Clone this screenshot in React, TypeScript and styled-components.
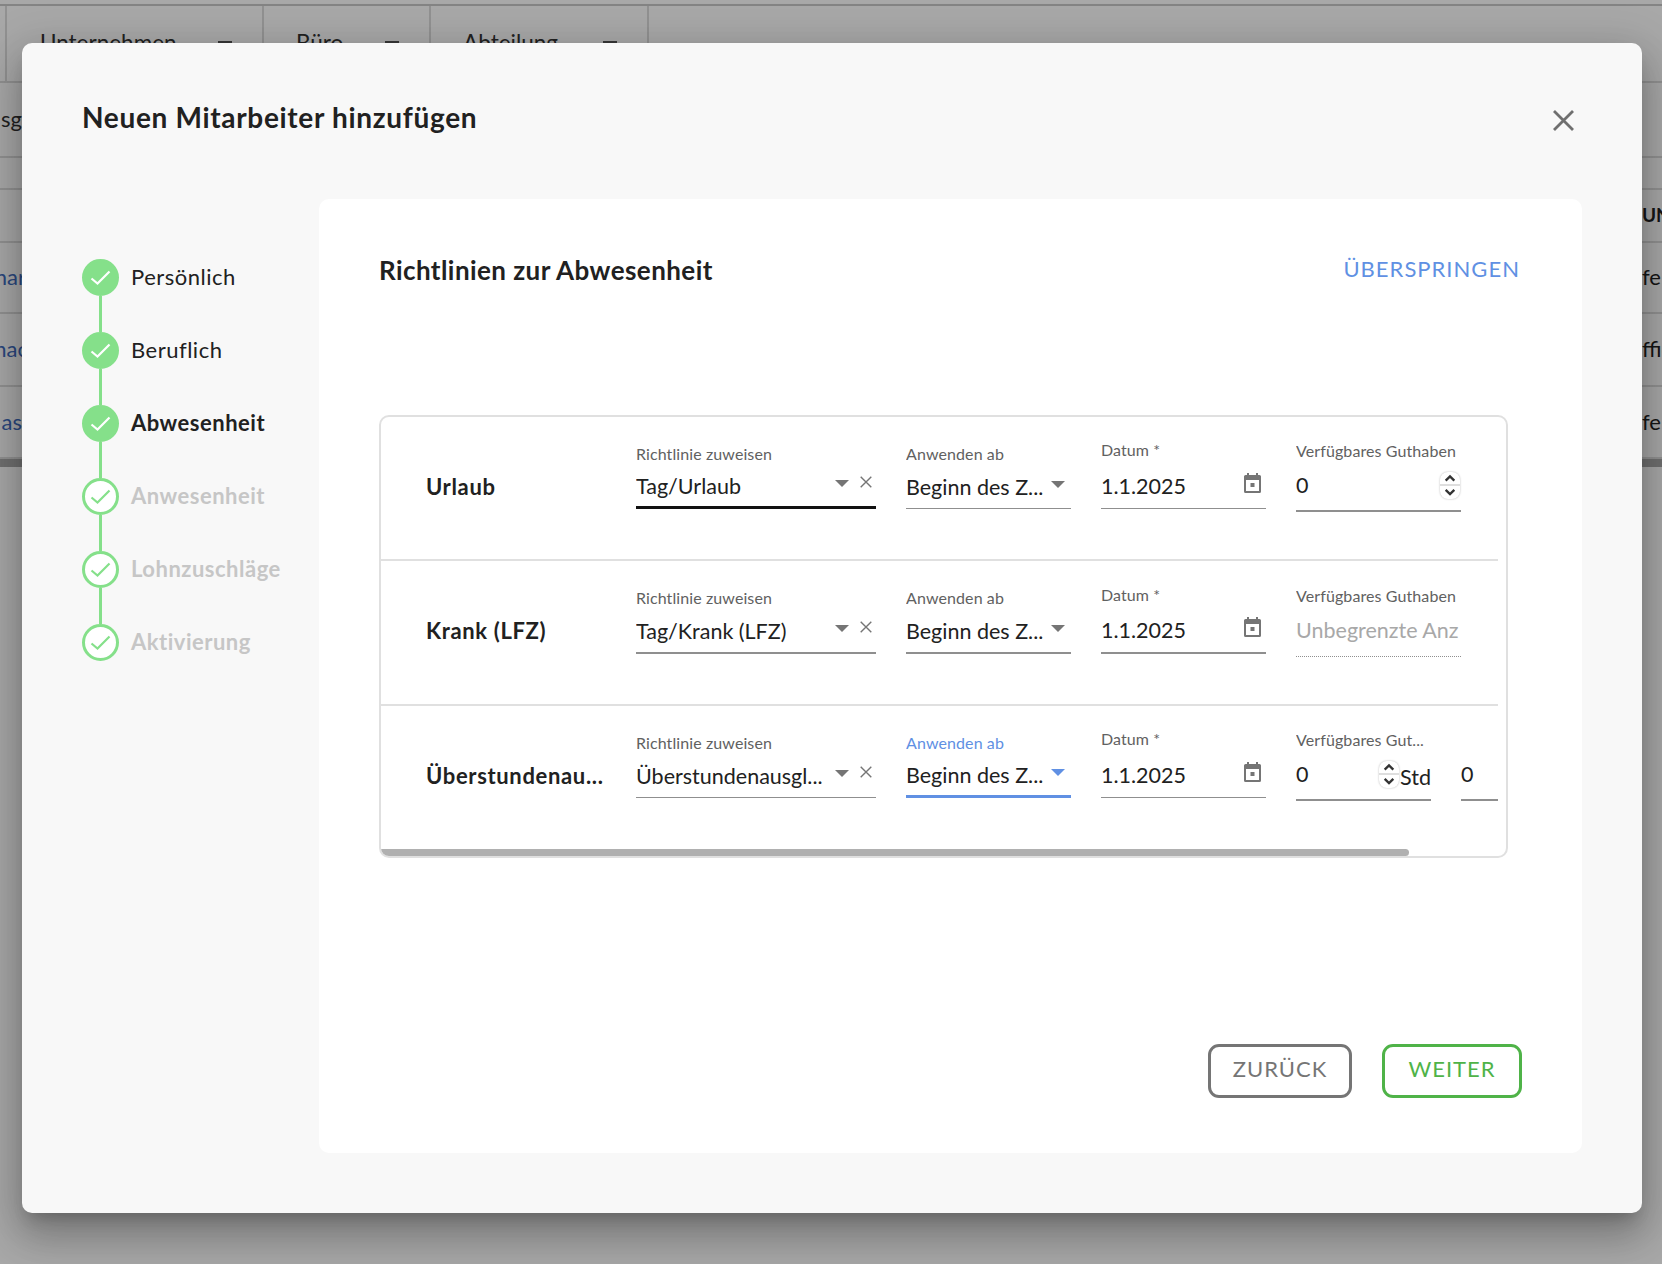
import React from "react";
import styled, { createGlobalStyle } from "styled-components";

const Global = createGlobalStyle`
  html, body { margin: 0; padding: 0; height: 100%; background: #fff; overflow: hidden; }
  body { font-family: "Lato", "Noto Sans", sans-serif; color: #212121; }
  * { box-sizing: border-box; }
`;

const Page = styled.div`
  position: relative;
  width: 1662px;
  height: 1264px;
  overflow: hidden;
`;

/* ---------- table behind the dialog ---------- */
const TableTop = styled.div`
  height: 6px;
  border-bottom: 2px solid #c8c8c8;
`;
const HeaderRow = styled.div`
  height: 77px;
  display: flex;
  border-bottom: 2px solid #dcdcdc;
  padding-left: 5px;
`;
const HeaderCell = styled.div<{ $w: number; $pad: number }>`
  width: ${(p) => p.$w}px;
  border-left: 2px solid #dcdcdc;
  display: flex;
  align-items: center;
  padding-left: ${(p) => p.$pad}px;
  font-size: 22.5px;
  color: #333;
  padding-bottom: 2px;
`;
const HeaderCaret = styled.span<{ $gap: number }>`
  margin-left: ${(p) => p.$gap}px;
  width: 14px;
  height: 3px;
  align-self: flex-start;
  margin-top: 35px;
  background: #555;
`;
const TableRow = styled.div<{ $h: number }>`
  height: ${(p) => p.$h}px;
  display: flex;
  justify-content: space-between;
  align-items: center;
  border-bottom: 2px solid #dcdcdc;
  font-size: 22px;
  padding-bottom: 2px;
`;
const EdgeLeft = styled.div<{ $blue?: boolean }>`
  width: 22px;
  overflow: hidden;
  display: flex;
  justify-content: flex-end;
  white-space: nowrap;
  color: ${(p) => (p.$blue ? "#3f6cc0" : "#333")};
`;
const EdgeLeftText = styled.span<{ $cut: number }>`
  flex: none;
  margin-right: -${(p) => p.$cut}px;
`;
const EdgeRight = styled.div<{ $small?: boolean }>`
  width: 20px;
  overflow: hidden;
  white-space: nowrap;
  color: #222;
  font-size: ${(p) => (p.$small ? 19 : 22)}px;
  font-weight: ${(p) => (p.$small ? 700 : 400)};
`;
const TableScroll = styled.div`
  height: 8px;
  background: #aaa;
`;

/* ---------- dialog ---------- */
const Overlay = styled.div`
  position: absolute;
  inset: 0;
  background: rgba(0, 0, 0, 0.34);
  padding: 43px 20px 50px 22px;
`;
const Modal = styled.div`
  height: 1170px;
  background: #f8f8f8;
  border-radius: 10px;
  box-shadow: 0 11px 15px -7px rgba(0, 0, 0, 0.2), 0 24px 38px 3px rgba(0, 0, 0, 0.18),
    0 9px 46px 8px rgba(0, 0, 0, 0.14);
  display: flex;
  flex-direction: column;
`;
const ModalHead = styled.div`
  height: 156px;
  flex: none;
  display: flex;
  justify-content: space-between;
  padding: 56px 68px 0 60px;
`;
const Title = styled.h1`
  margin: 0;
  font-size: 28px;
  line-height: 36px;
  font-weight: 700;
  color: #212121;
  letter-spacing: 0.68px;
`;
const CloseIcon = styled.svg`
  width: 21px;
  height: 21px;
  margin-top: 11px;
`;
const ModalBody = styled.div`
  flex: 1;
  min-height: 0;
  display: flex;
  padding: 0 60px 60px 60px;
`;
const Side = styled.nav`
  width: 237px;
  flex: none;
  padding-top: 60px;
`;
const StepRow = styled.div`
  display: flex;
  align-items: center;
  gap: 12px;
  height: 37px;
`;
const StepCircle = styled.div<{ $done: boolean }>`
  width: 37px;
  height: 37px;
  border-radius: 50%;
  flex: none;
  display: flex;
  align-items: center;
  justify-content: center;
  background: ${(p) => (p.$done ? "#85e08a" : "#fff")};
  border: 3px solid #85e08a;
`;
const StepText = styled.span<{ $state: "done" | "active" | "todo" }>`
  font-size: 22px;
  letter-spacing: 0.5px;
  white-space: nowrap;
  padding-bottom: 2px;
  font-weight: ${(p) => (p.$state === "done" ? 400 : 700)};
  color: ${(p) => (p.$state === "todo" ? "#c6c6c6" : "#212121")};
`;
const StepLine = styled.div`
  width: 3px;
  height: 36px;
  margin-left: 17px;
  background: #85e08a;
`;
const Panel = styled.section`
  flex: 1;
  min-width: 0;
  background: #fff;
  border-radius: 10px;
  padding: 53px 62px 55px 60px;
  display: flex;
  flex-direction: column;
`;
const PanelHead = styled.div`
  display: flex;
  justify-content: space-between;
  align-items: center;
  height: 36px;
`;
const PanelTitle = styled.h2`
  margin: 0;
  font-size: 26px;
  font-weight: 700;
  letter-spacing: 0.43px;
  color: #212121;
`;
const Skip = styled.a`
  font-size: 22px;
  letter-spacing: 1.02px;
  color: #6090e3;
  margin-bottom: 3px;
`;
const Card = styled.div`
  margin-top: 127px;
  width: 1129px;
  height: 443px;
  border: 2px solid #e0e0e0;
  border-radius: 10px;
  overflow: hidden;
  display: flex;
  flex-direction: column;
`;
const Row = styled.div<{ $last?: boolean; $h: number }>`
  width: 1117px;
  height: ${(p) => p.$h}px;
  flex: none;
  display: flex;
  align-items: flex-start;
  overflow: hidden;
  padding-left: 45px;
  gap: 30px;
  border-bottom: ${(p) => (p.$last ? "0" : "2px solid #e0e0e0")};
`;
const RowName = styled.div`
  width: 180px;
  flex: none;
  padding-top: 53px;
  line-height: 34px;
  font-size: 22px;
  font-weight: 700;
  letter-spacing: 0.65px;
  white-space: nowrap;
  overflow: hidden;
  color: #212121;
`;
const Field = styled.div<{ $w: number; $top: number }>`
  width: ${(p) => p.$w}px;
  flex: none;
  padding-top: ${(p) => p.$top}px;
`;
const Label = styled.div<{ $focus?: boolean }>`
  height: 20px;
  line-height: 20px;
  font-size: 16px;
  letter-spacing: 0.1px;
  white-space: nowrap;
  overflow: hidden;
  color: ${(p) => (p.$focus ? "#6090e3" : "#616161")};
`;
const Value = styled.div<{ $h: number; $line: string }>`
  height: ${(p) => p.$h}px;
  display: flex;
  align-items: center;
  border-bottom: ${(p) => p.$line};
  font-size: 21.5px;
  color: #212121;
`;
const ValueText = styled.span<{ $muted?: boolean; $drop?: number }>`
  flex: 1;
  min-width: 0;
  white-space: nowrap;
  overflow: hidden;
  padding-top: ${(p) => Math.max(p.$drop ?? 0, 0)}px;
  padding-bottom: ${(p) => Math.max(-(p.$drop ?? 0), 0)}px;
  color: ${(p) => (p.$muted ? "#a8a8a8" : "#212121")};
`;
const Caret = styled.span<{ $focus?: boolean }>`
  flex: none;
  width: 0;
  height: 0;
  margin: 0 0 4px 4px;
  border-left: 7px solid transparent;
  border-right: 7px solid transparent;
  border-top: 7px solid ${(p) => (p.$focus ? "#6090e3" : "#757575")};
`;
const ClearIcon = styled.svg`
  flex: none;
  width: 12px;
  height: 12px;
  margin: 0 4px 6px 11px;
`;
const CaretEnd = styled.span`
  flex: none;
  width: 6px;
`;
const CalendarIcon = styled.svg`
  flex: none;
  width: 17px;
  height: 20px;
  margin: 0 5px 3px 0;
`;
const Stepper = styled.div`
  flex: none;
  width: 20px;
  height: 27px;
  margin: 0 1px 1px 0;
  border-radius: 8px;
  background: #fff;
  box-shadow: 0 0 2px rgba(0, 0, 0, 0.3);
  display: flex;
  flex-direction: column;
`;
const StepperHalf = styled.svg<{ $top?: boolean }>`
  flex: 1;
  width: 100%;
  min-height: 0;
  border-bottom: ${(p) => (p.$top ? "2px solid #dedede" : "0")};
`;
const Unit = styled.span`
  flex: none;
  margin: 4px 0 0 0;
`;
const Scrollbar = styled.div`
  width: 1028px;
  height: 7px;
  flex: none;
  margin-top: auto;
  background: #b0b0b0;
  border-radius: 0 4px 4px 0;
`;
const Footer = styled.div`
  margin-top: auto;
  display: flex;
  justify-content: flex-end;
  gap: 30px;
  margin-right: -2px;
`;
const OutlineButton = styled.button<{ $color: string; $w: number }>`
  width: ${(p) => p.$w}px;
  height: 54px;
  background: #fff;
  border: 3px solid ${(p) => p.$color};
  border-radius: 11px;
  color: ${(p) => p.$color};
  font-family: inherit;
  font-size: 22px;
  letter-spacing: 1px;
  padding: 0 0 5px;
`;

/* ---------- drawings ---------- */
const Check = ({ color }: { color: string }) => (
  <svg width="21" height="16" viewBox="0 0 21 16" fill="none">
    <path d="M1.5 8.5 L7.5 13.5 L19.5 1.5" stroke={color} strokeWidth="2.2" />
  </svg>
);
const Close = () => (
  <CloseIcon viewBox="0 0 21 21" fill="none">
    <path d="M1 1 L20 20 M20 1 L1 20" stroke="#6f6f6f" strokeWidth="2.8" />
  </CloseIcon>
);
const Clear = () => (
  <ClearIcon viewBox="0 0 12 12" fill="none">
    <path d="M.7.7 L11.3 11.3 M11.3.7 L.7 11.3" stroke="#757575" strokeWidth="1.4" />
  </ClearIcon>
);
const Calendar = () => (
  <CalendarIcon viewBox="0 0 17 20">
    <path
      fill="#757575"
      d="M3 0h2v2h7V0h2v2h1.5A1.5 1.5 0 0 1 17 3.5v15a1.5 1.5 0 0 1-1.5 1.5h-14A1.5 1.5 0 0 1 0 18.5v-15A1.5 1.5 0 0 1 1.5 2H3zM2 7v11h13V7z"
    />
    <rect x="6.5" y="10" width="4" height="4" fill="#757575" />
  </CalendarIcon>
);
const Spin = () => (
  <Stepper>
    <StepperHalf $top viewBox="0 0 20 13" fill="none">
      <path d="M5.5 9 L10 4.5 L14.5 9" stroke="#333" strokeWidth="2.4" />
    </StepperHalf>
    <StepperHalf viewBox="0 0 20 13" fill="none">
      <path d="M5.5 4 L10 8.5 L14.5 4" stroke="#333" strokeWidth="2.4" />
    </StepperHalf>
  </Stepper>
);

const SelectField = ({ label, value, w, line, h = 44, focus, clear }: { label: string; value: string; w: number; line: string; h?: number; focus?: boolean; clear?: boolean }) => (
  <Field $w={w} $top={27}>
    <Label $focus={focus}>{label}</Label>
    <Value $h={h + 1} $line={line}>
      <ValueText $drop={2}>{value}</ValueText>
      <Caret $focus={focus} />
      {clear ? <Clear /> : <CaretEnd />}
    </Value>
  </Field>
);
const DateField = ({ top, h, line }: { top: number; h: number; line: string }) => (
  <Field $w={165} $top={top}>
    <Label>Datum *</Label>
    <Value $h={h} $line={line}>
      <ValueText $drop={3}>1.1.2025</ValueText>
      <Calendar />
    </Value>
  </Field>
);

const steps: { t: string; s: "done" | "active" | "todo" }[] = [
  { t: "Persönlich", s: "done" },
  { t: "Beruflich", s: "done" },
  { t: "Abwesenheit", s: "active" },
  { t: "Anwesenheit", s: "todo" },
  { t: "Lohnzuschläge", s: "todo" },
  { t: "Aktivierung", s: "todo" },
];

const LINE1 = "1px solid #8f8f8f";
const LINE2 = "2px solid #8f8f8f";

export default function App() {
  return (
    <Page>
      <Global />
      <TableTop />
      <HeaderRow>
        <HeaderCell $w={257} $pad={33}>Unternehmen<HeaderCaret $gap={41} /></HeaderCell>
        <HeaderCell $w={167} $pad={32}>Büro<HeaderCaret $gap={42} /></HeaderCell>
        <HeaderCell $w={218} $pad={32}>Abteilung<HeaderCaret $gap={45} /></HeaderCell>
        <HeaderCell $w={2} $pad={0} />
      </HeaderRow>
      <TableRow $h={75}><EdgeLeft><EdgeLeftText $cut={0}>sg</EdgeLeftText></EdgeLeft><EdgeRight /></TableRow>
      <TableRow $h={32} />
      <TableRow $h={53}><EdgeLeft /><EdgeRight $small>UN</EdgeRight></TableRow>
      <TableRow $h={71}><EdgeLeft $blue><EdgeLeftText $cut={4}>har</EdgeLeftText></EdgeLeft><EdgeRight>fe</EdgeRight></TableRow>
      <TableRow $h={73}><EdgeLeft $blue><EdgeLeftText $cut={6}>hac</EdgeLeftText></EdgeLeft><EdgeRight>ffic</EdgeRight></TableRow>
      <TableRow $h={72}><EdgeLeft $blue><EdgeLeftText $cut={0}>as</EdgeLeftText></EdgeLeft><EdgeRight>fe</EdgeRight></TableRow>
      <TableScroll />

      <Overlay>
        <Modal>
          <ModalHead>
            <Title>Neuen Mitarbeiter hinzufügen</Title>
            <Close />
          </ModalHead>
          <ModalBody>
            <Side>
              {steps.map((s, i) => (
                <React.Fragment key={s.t}>
                  <StepRow>
                    <StepCircle $done={s.s !== "todo"}>
                      <Check color={s.s === "todo" ? "#85e08a" : "#fff"} />
                    </StepCircle>
                    <StepText $state={s.s}>{s.t}</StepText>
                  </StepRow>
                  {i < steps.length - 1 && <StepLine />}
                </React.Fragment>
              ))}
            </Side>
            <Panel>
              <PanelHead>
                <PanelTitle>Richtlinien zur Abwesenheit</PanelTitle>
                <Skip>ÜBERSPRINGEN</Skip>
              </PanelHead>
              <Card>
                <Row $h={144}>
                  <RowName>Urlaub</RowName>
                  <SelectField w={240} label="Richtlinie zuweisen" value="Tag/Urlaub" line="3px solid #111" clear />
                  <SelectField w={165} label="Anwenden ab" value="Beginn des Z..." line={LINE1} />
                  <DateField top={23} h={49} line={LINE1} />
                  <Field $w={165} $top={24}>
                    <Label>Verfügbares Guthaben</Label>
                    <Value $h={51} $line={LINE2}>
                      <ValueText $drop={-1}>0</ValueText>
                      <Spin />
                    </Value>
                  </Field>
                </Row>
                <Row $h={145}>
                  <RowName>Krank (LFZ)</RowName>
                  <SelectField w={240} h={45} label="Richtlinie zuweisen" value="Tag/Krank (LFZ)" line={LINE2} clear />
                  <SelectField w={165} h={45} label="Anwenden ab" value="Beginn des Z..." line={LINE2} />
                  <DateField top={24} h={49} line={LINE2} />
                  <Field $w={165} $top={25}>
                    <Label>Verfügbares Guthaben</Label>
                    <Value $h={51} $line="1px dotted #8f8f8f">
                      <ValueText $muted $drop={-3}>Unbegrenzte Anz</ValueText>
                    </Value>
                  </Field>
                </Row>
                <Row $h={143} $last>
                  <RowName>Überstundenau...</RowName>
                  <SelectField w={240} label="Richtlinie zuweisen" value="Überstundenausgl..." line={LINE1} clear />
                  <SelectField w={165} label="Anwenden ab" value="Beginn des Z..." line="3px solid #6090e3" focus />
                  <DateField top={23} h={49} line={LINE1} />
                  <Field $w={135} $top={24}>
                    <Label>Verfügbares Gut...</Label>
                    <Value $h={51} $line={LINE2}>
                      <ValueText $drop={-1}>0</ValueText>
                      <Spin />
                      <Unit>Std</Unit>
                    </Value>
                  </Field>
                  <Field $w={60} $top={44}>
                    <Value $h={51} $line={LINE2}>
                      <ValueText $drop={-1}>0</ValueText>
                    </Value>
                  </Field>
                </Row>
                <Scrollbar />
              </Card>
              <Footer>
                <OutlineButton $color="#757575" $w={144}>ZURÜCK</OutlineButton>
                <OutlineButton $color="#4fb348" $w={140}>WEITER</OutlineButton>
              </Footer>
            </Panel>
          </ModalBody>
        </Modal>
      </Overlay>
    </Page>
  );
}
